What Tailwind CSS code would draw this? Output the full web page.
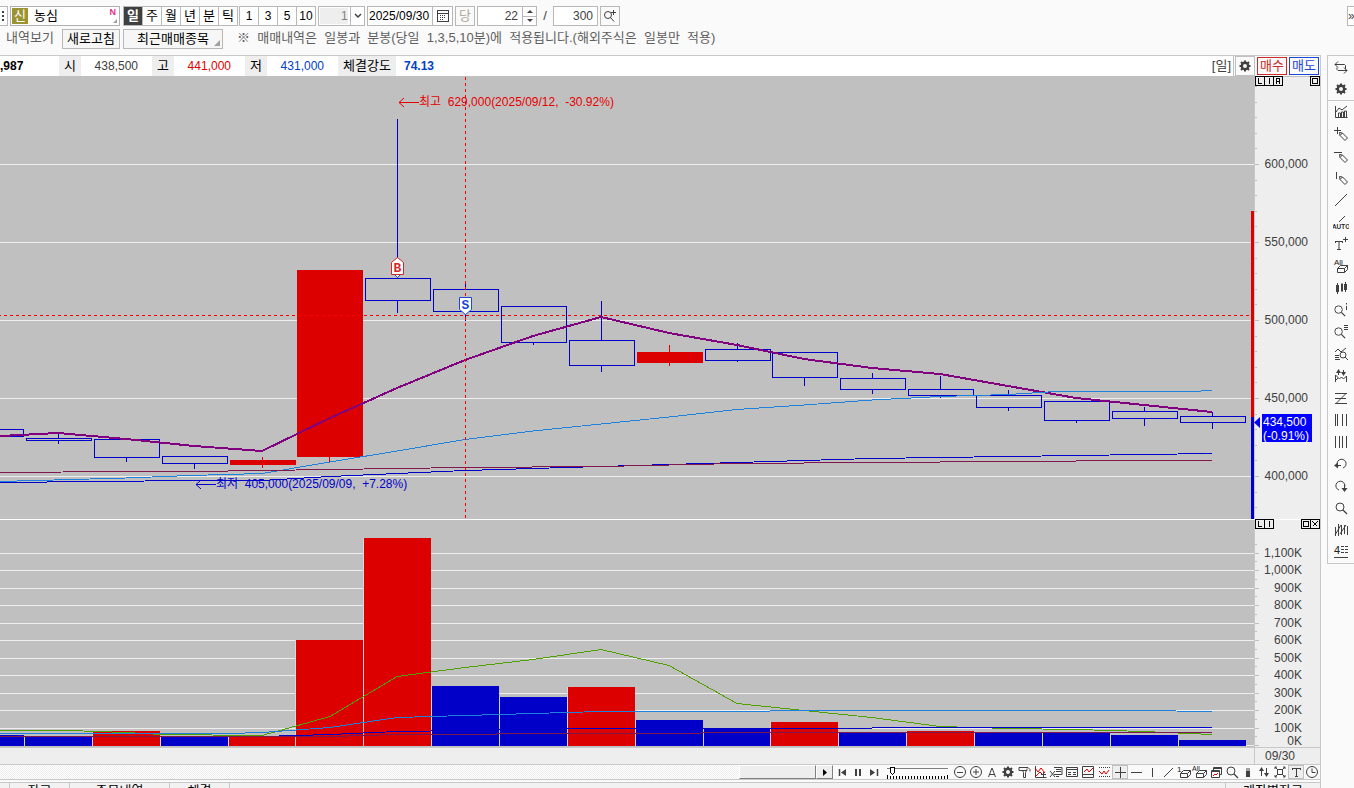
<!DOCTYPE html>
<html lang="ko">
<head>
    <meta charset="UTF-8">
    <meta name="viewport" content="width=device-width, initial-scale=1.0">
    <title>농심 일봉 차트</title>
    <script src="https://cdn.jsdelivr.net/npm/@tailwindcss/browser@4"></script>
</head>
<body class="flex h-screen flex-col overflow-hidden bg-[#fafafa] font-['Liberation_Sans','Noto_Sans_CJK_KR',sans-serif] text-[13px] leading-4 text-black">

    <!-- 아이콘 -->
    <svg class="hidden">
        <symbol id="gear" viewBox="0 0 16 16"><circle cx="8" cy="8" r="3.200" fill="none" stroke="#404040" stroke-width="2.4"/><path d="M8 2.500v2M8 11.500v2M2.500 8h2M11.500 8h2M4 4l1.500 1.500M10.500 10.500l1.500 1.500M4 12l1.500-1.500M10.500 5.500l1.500-1.500" stroke="#404040" stroke-width="2"/></symbol>
        <symbol id="search" viewBox="0 0 16 16"><circle cx="7" cy="7" r="4" fill="none" stroke="#404040"/><path d="M10 10l4 4" stroke="#404040" stroke-width="1.3"/></symbol>
        <symbol id="pencil" viewBox="0 0 16 16"><path d="M6.500 6.500l3 .5 5 5-2.500 2.500-5-5zM7 9.500l2.500-2.500" fill="none" stroke="#404040"/></symbol>
        <symbol id="eraser" viewBox="0 0 16 16"><path d="M4.500 9.500l3-3h7l-3 3zM4.500 9.500v4h7v-4M11.500 13.500l3-3v-4" fill="none" stroke="#404040"/></symbol>
        <symbol id="slash" viewBox="0 0 16 16"><path d="M2 14L14 2" stroke="#404040"/></symbol>
    </svg>

    <header class="flex h-[55px] shrink-0 flex-col gap-[3px] pt-1.5">
        <div class="flex h-5 items-stretch">
            <button class="w-2 border border-l-0 border-[#b8b8b8] bg-white" aria-label="메뉴"><svg class="h-4 w-full" viewBox="0 0 7 16" shape-rendering="crispEdges"><path d="M2 3h2v2H2zM2 7h2v2H2zM2 11h2v2H2z" fill="#404040"/></svg></button>
            <div class="relative ml-0.5 flex w-[110px] items-center border border-[#b0b0b0] bg-white">
                <span class="ml-px h-4 w-4 bg-[#9c9430] text-center leading-4 text-white">신</span>
                <input class="ml-1.5 w-16 bg-transparent outline-none" value="농심" aria-label="종목">
                <b class="absolute top-0 right-[3px] text-[9px] leading-[10px] text-[#e0308a]">N</b>
                <svg class="absolute right-0.5 bottom-0.5 size-1" viewBox="0 0 4 4"><path d="M4 0v4H0z" fill="#a0a0a0"/></svg>
            </div>
            <div class="ml-[3px] flex divide-x divide-[#b8b8b8] border border-[#b8b8b8] bg-white">
                <button class="w-[19px] bg-[#404040] font-bold text-white">일</button>
                <button class="w-[19px]">주</button>
                <button class="w-[19px]">월</button>
                <button class="w-[19px]">년</button>
                <button class="w-[19px]">분</button>
                <button class="w-[18px]">틱</button>
            </div>
            <div class="ml-px flex divide-x divide-[#b8b8b8] border border-[#b8b8b8] bg-white text-xs">
                <button class="w-[19px]">1</button>
                <button class="w-[19px]">3</button>
                <button class="w-[19px]">5</button>
                <button class="w-[18px]">10</button>
            </div>
            <div class="relative ml-0.5 flex w-[47px] border border-[#b8b8b8] bg-white">
                <select class="m-px w-7 appearance-none bg-[#eee] pl-[21px] text-xs text-[#808080] outline-none" aria-label="분 단위"><option>1</option></select>
                <span class="ml-px flex flex-1 items-center justify-center border-l border-[#b8b8b8]"><svg class="w-2" viewBox="0 0 8 6"><path d="M1 1l3 3 3-3" fill="none" stroke="#404040" stroke-width="1.500"/></svg></span>
            </div>
            <div class="ml-0.5 flex w-[86px] border border-[#b8b8b8] bg-white">
                <input class="w-16 min-w-0 pl-px text-xs outline-none" value="2025/09/30" aria-label="날짜">
                <button class="flex flex-1 items-center justify-center border-l border-[#b8b8b8]" aria-label="달력"><svg class="size-3" viewBox="0 0 12 12" shape-rendering="crispEdges"><path d="M.5.5h11v11H.5zM0 3.500h12" fill="none" stroke="#404040"/><path d="M3 5.500h6M3 7.500h6M3 9.500h4" stroke="#404040" stroke-dasharray="1 1"/></svg></button>
            </div>
            <button class="ml-0.5 w-5 border border-[#b8b8b8] text-[#b0a898]">당</button>
            <div class="ml-0.5 flex w-[60px] border border-[#b8b8b8] bg-white">
                <input class="w-11 min-w-0 pr-1 text-right text-xs text-[#404040] outline-none" value="22" aria-label="현재 봉">
                <div class="flex flex-1 flex-col divide-y divide-[#b8b8b8] border-l border-[#b8b8b8]">
                    <button class="flex flex-1 items-center justify-center" aria-label="증가"><svg class="w-1.5" viewBox="0 0 6 3"><path d="M3 0l3 3H0z" fill="#404040"/></svg></button>
                    <button class="flex flex-1 items-center justify-center" aria-label="감소"><svg class="w-1.5" viewBox="0 0 6 3"><path d="M0 0h6L3 3z" fill="#404040"/></svg></button>
                </div>
            </div>
            <span class="w-4 pt-0.5 text-center text-[#404040]">/</span>
            <input class="w-[45px] border border-[#b8b8b8] bg-white pr-1 text-right text-xs text-[#404040] outline-none" value="300" aria-label="전체 봉">
            <button class="ml-0.5 flex w-5 items-center justify-center border border-[#b8b8b8]" aria-label="확대"><svg class="size-4" viewBox="0 0 16 16"><circle cx="6" cy="7" r="3.500" fill="none" stroke="#404040"/><path d="M8.500 9.500l3.500 4M9 4.500h5M11.500 2v5" stroke="#404040"/></svg></button>
            <button class="ml-auto w-[7px] overflow-hidden border border-r-0 border-[#b8b8b8] bg-white text-xs text-[#404040]">»</button>
        </div>
        <div class="flex h-5 items-stretch text-[#606060]">
            <span class="w-[62px] pt-px pl-1.5">내역보기</span>
            <button class="w-[58px] border border-[#b8b8b8] bg-[#f6f6f6] text-black">새로고침</button>
            <button class="relative ml-[3px] w-[100px] border border-[#b8b8b8] bg-[#f6f6f6] text-black">최근매매종목<svg class="absolute right-0.5 bottom-0.5 size-1.5" viewBox="0 0 4 4"><path d="M4 0v4H0z" fill="#a0a0a0"/></svg></button>
            <p class="ml-3.5 pt-px whitespace-pre">※  매매내역은  일봉과  분봉(당일  1,3,5,10분)에  적용됩니다.(해외주식은  일봉만  적용)</p>
        </div>
    </header>

    <div class="flex flex-1 items-start">
        <main class="min-w-0 flex-1 border-t border-r border-[#c8c8c8]">
            <!-- 시세 줄 -->
            <div class="flex h-[21px] items-stretch border-b border-[#c0c0c0] bg-white leading-5">
                <b class="w-[59px] text-xs leading-5">,987</b>
                <span class="w-[22px] bg-[#eee] text-center">시</span>
                <span class="w-[71px] pr-3.5 text-right text-xs leading-5 text-[#404040]">438,500</span>
                <span class="w-[22px] bg-[#eee] text-center">고</span>
                <span class="w-[71px] pr-3.5 text-right text-xs leading-5 text-[#dc0000]">441,000</span>
                <span class="w-[22px] bg-[#eee] text-center">저</span>
                <span class="w-[71px] pr-3.5 text-right text-xs leading-5 text-[#0040c8]">431,000</span>
                <span class="w-[58px] bg-[#eee] text-center">체결강도</span>
                <b class="ml-2 text-xs leading-5 text-[#0040c8]">74.13</b>
                <span class="ml-auto border-r border-[#c0c0c0] pr-0.5 text-[#404040]">[일]</span>
                <div class="flex gap-0.5 bg-[#fafafa] pr-px pl-px">
                    <button class="flex w-5 items-center justify-center border border-[#c0c0c0]" aria-label="설정"><svg class="size-4"><use href="#gear"/></svg></button>
                    <button class="my-px w-[30px] border border-[#d42828] leading-4 text-[#d42828]">매수</button>
                    <button class="my-px w-[30px] border border-[#1c48d8] leading-4 text-[#1c48d8]">매도</button>
                </div>
            </div>

            <!-- 가격 차트 -->
            <div class="flex h-[443px] border-b border-white bg-[#c0c0c0]">
                <svg id="price" class="h-full min-w-0 flex-1 text-xs" viewBox="0 77 1254 442" preserveAspectRatio="xMaxYMin slice"></svg>
                <svg id="price-axis" class="h-full w-[66px] overflow-visible border-l border-[#c8c8c8] bg-[#eee] text-xs" viewBox="1255 77 65 442"></svg>
            </div>

            <!-- 거래량 차트 -->
            <div class="flex h-[227px] bg-[#c0c0c0]">
                <svg id="volume" class="h-full min-w-0 flex-1" viewBox="0 520 1254 227" preserveAspectRatio="xMaxYMin slice"></svg>
                <svg id="volume-axis" class="h-full w-[66px] overflow-visible border-l border-[#c8c8c8] bg-[#eee] text-xs" viewBox="1255 520 65 227"></svg>
            </div>

            <div class="flex h-[18px] justify-end border-y border-[#c8c8c8] bg-[#eee]">
                <span class="w-[66px] border-l border-[#c8c8c8] pl-2.5 text-xs text-[#404040]">09/30</span>
            </div>

            <!-- 하단 도구 -->
            <div class="flex h-[15px] items-stretch border-b border-[#c8c8c8]">
                <div class="flex min-w-0 flex-1 justify-end bg-[repeating-conic-gradient(#eee_0_25%,#fff_0_50%)] bg-size-[2px_2px]">
                    <div class="w-[77px] border border-t-white border-r-[#808080] border-b-[#808080] border-l-white bg-[#eee]"></div>
                    <button class="flex w-[17px] items-center justify-center border border-t-white border-r-[#808080] border-b-[#808080] border-l-white bg-[#eee]" aria-label="오른쪽"><svg class="h-[7px] w-1" viewBox="0 0 4 7"><path d="M0 0l4 3.500L0 7z"/></svg></button>
                </div>
                <div class="flex items-center pl-px">
                    <button aria-label="처음"><svg class="size-4" viewBox="0 0 16 16"><path d="M5.500 5v7" stroke="#404040" stroke-width="1.500"/><path d="M12 5v7L7 8.500z" fill="#404040"/></svg></button>
                    <button aria-label="일시정지"><svg class="size-4" viewBox="0 0 16 16" shape-rendering="crispEdges"><path d="M5 5h2v7H5zM9 5h2v7H9z" fill="#404040"/></svg></button>
                    <button aria-label="끝"><svg class="size-4" viewBox="0 0 16 16"><path d="M11.500 5v7" stroke="#404040" stroke-width="1.500"/><path d="M4 5v7l5-3.500z" fill="#404040"/></svg></button>
                    <div class="relative mr-1 ml-[5px] h-3.5 w-[61px]">
                        <svg class="h-3.5 w-full" viewBox="0 0 61 14" shape-rendering="crispEdges"><path d="M0 3.500h61" stroke="#808080"/><path d="M0 12.500h61" stroke="#000" stroke-width="3" stroke-dasharray="1 2"/><path d="M.5 10v4M60.500 10v4" stroke="#000"/><path d="M3.500 2.500h4v5l-2 2-2-2z" fill="#fff" stroke="#000"/></svg>
                        <input type="range" class="absolute inset-0 w-full opacity-0" min="0" max="20" value="1" aria-label="속도">
                    </div>
                    <div id="bottom-tools" class="flex"></div>
                </div>
            </div>

            <!-- 화면 탭 -->
            <nav class="mt-0.5 flex h-8 items-start border-t border-[#c8c8c8] bg-[#f2f2f2] leading-4 *:h-full *:pb-4">
                <span class="w-2.5 border-r border-[#c8c8c8]"></span>
                <button class="w-[60px] border-r border-[#c8c8c8]">잔고</button>
                <button class="w-[100px] border-r border-[#c8c8c8]">주문내역</button>
                <button class="w-[60px] border-r border-[#c8c8c8]">체결</button>
                <button class="ml-auto w-[95px] border-l border-[#c8c8c8]">계좌별잔고</button>
            </nav>
        </main>

        <!-- 우측 그리기 도구 -->
        <aside id="side-tools" class="ml-1.5 w-[27px] shrink-0 border-y border-l border-[#c8c8c8]"></aside>
    </div>

    <script>
        const RED = '#dc0000', BLUE = '#0000c8';

        // 봉 왼쪽 x, 색, 몸통 위/아래, 꼬리 위/아래, 거래량 막대 위
        const candles = [
            [-42, 'b', 429, 436, 429, 436, 735],
            [26, 'b', 438, 440, 434, 443, 737],
            [94, 'b', 439, 457, 439, 461, 731, 'r'],
            [162, 'b', 456, 463, 456, 468, 737],
            [230, 'r', 460, 464, 457, 467, 736],
            [297, 'r', 270, 456, 270, 461, 640],
            [365, 'b', 278, 300, 119, 312, 538, 'r'],
            [433, 'b', 289, 311, 284, 320, 686],
            [501, 'b', 306, 342, 306, 344, 697],
            [569, 'b', 340, 365, 301, 371, 687, 'r'],
            [637, 'r', 352, 362, 345, 365, 720, 'b'],
            [705, 'b', 349, 360, 343, 361, 728],
            [772, 'b', 352, 377, 352, 385, 722, 'r'],
            [840, 'b', 378, 389, 373, 393, 732],
            [908, 'b', 389, 395, 376, 397, 731, 'r'],
            [976, 'b', 395, 407, 390, 410, 733],
            [1044, 'b', 401, 420, 401, 422, 733],
            [1112, 'b', 411, 418, 407, 425, 735],
            [1180, 'b', 416, 422, 412, 428, 740]
        ];

        const priceLines = [
            ['#800080', 2, '0,436 20,435 58,433 126,439 194,446 262,451 330,418 397,388 465,360 533,336 601,317 669,333 737,345 804,359 872,368 940,374 1008,386 1076,398 1144,405 1212,412'],
            ['#1e82dc', 1, '0,481.500 126,478 190,475.500 262,473.500 330,462 397,451 465,439.500 533,431 601,424 669,417 737,409.500 804,405 872,400 940,396.500 1008,394.500 1056,391.500 1190,391.500 1212,390.500'],
            [BLUE, 1, '0,482.500 194,480.500 262,480.500 330,476.500 397,473.500 465,470.500 533,468.500 601,466.500 669,464.500 737,462.500 804,460.500 872,458.500 940,457.500 1008,456.500 1076,455.500 1144,454.500 1212,453.500'],
            ['#801850', 1, '0,472.500 126,471.500 194,471.500 330,469.500 465,467.500 601,466.500 737,463.500 872,462.500 1008,461.500 1144,460.500 1212,460.500']
        ];
        const volumeLines = [
            ['#50a000', 1, '0,730.500 69,730.500 126,732.500 162,734.500 262,735.500 330,716.500 397,676.500 465,667.500 533,659.500 601,649.500 669,665.500 737,703.500 804,710.500 872,717.500 940,726.500 1008,728.500 1076,729.500 1144,731.500 1212,734.500'],
            ['#1e82dc', 1, '0,733.500 228,733.500 262,732.500 330,727.500 397,717.500 465,715.500 533,713.500 601,711.500 737,711.500 804,710.500 1140,710.500 1212,711.500'],
            [BLUE, 1, '0,736.500 262,736.500 330,734.500 397,731.500 465,730.500 533,729.500 601,728.500 804,728.500 940,727.500 1212,727.500'],
            ['#801850', 1, '0,736.500 330,736.500 397,734.500 601,733.500 804,732.500 1212,732.500']
        ];

        const rect = (x, y, w, h, fill) => `<rect x="${x}" y="${y}" width="${w}" height="${h}" fill="${fill}"/>`;
        const lines = list => list.map(([c, w, p]) => `<polyline points="${p}" fill="none" stroke="${c}" stroke-width="${w}"/>`).join('');
        const color = c => c === 'r' ? RED : BLUE;

        // 가격 차트
        let out = '<g shape-rendering="crispEdges">';
        [164, 242, 320, 398, 476].forEach(y => out += rect(-2000, y, 3254, 1, '#eee'));
        candles.forEach(([x, c, top, bottom, high, low]) => {
            out += rect(x + 32, high, 1, top - high, color(c)) + rect(x + 32, bottom, 1, low - bottom + 1, color(c));
            out += c === 'r'
                ? rect(x, top, 66, bottom - top + 1, RED)
                : `<rect x="${x + 0.5}" y="${top + 0.5}" width="65" height="${bottom - top}" fill="none" stroke="${BLUE}"/>`;
        });
        out += lines(priceLines);
        out += '<path d="M-2000 315.500H1254M465.500 77V518" fill="none" stroke="#f00" stroke-dasharray="3 3"/>';
        out += rect(1251, 211, 3, 206, RED) + rect(1251, 417, 3, 102, BLUE) + '</g>';
        out += `<path d="M399 102.500h20M404 98l-5 4.500 5 4.500" fill="none" stroke="#e60000"/><text x="419" y="106" fill="#e60000" class="whitespace-pre">최고  629,000(2025/09/12,  -30.92%)</text>`;
        out += `<path d="M196 484.500h20M201 480l-5 4.500 5 4.500" fill="none" stroke="${BLUE}"/><text x="216" y="488" fill="${BLUE}" class="whitespace-pre">최저  405,000(2025/09/09,  +7.28%)</text>`;
        out += '<path d="M391.500 274.500v-12l6-5 6 5v12z" fill="#fff" stroke="#d42828"/><path d="M395 275l2.500 2.500 2.500-2.500" fill="#fff" stroke="#1c48d8"/><text x="397.500" y="272" text-anchor="middle" font-size="13" font-weight="bold" font-family="Liberation Mono" fill="#d42828">B</text>';
        out += '<path d="M459.500 297.500h12v12l-6 5-6-5z" fill="#fff" stroke="#1c48d8"/><text x="465.500" y="309" text-anchor="middle" font-size="13" font-weight="bold" font-family="Liberation Mono" fill="#1c48d8">S</text>';
        document.getElementById('price').innerHTML = out;

        // 거래량 차트
        const volumeGrid = [553, 570, 588, 605, 623, 640, 658, 675, 693, 710, 728, 745];
        out = '<g shape-rendering="crispEdges">';
        volumeGrid.forEach(y => out += rect(-2000, y, 3254, 1, '#eee'));
        candles.forEach(([x, c, , , , , top, v]) => {
            out += rect(x - 2, top, 1, 746 - top, '#d8d8d8') + rect(x - 1, top, 67, 746 - top, color(v || c));
        });
        out += lines(volumeLines) + '</g>';
        document.getElementById('volume').innerHTML = out;

        // 축
        const mark = (x, y, inner) => `<rect x="${x + 0.5}" y="${y + 0.5}" width="9" height="9" fill="#eee" stroke="#000"/><path d="${inner}" transform="translate(${x} ${y})" fill="none" stroke="#000"/>`;
        const L = 'M3.500 2v5.500h3', I = 'M5.500 2v6', R = 'M3.500 8V2.500h3v2.500h-3M5.500 5l1.500 3', BOX = 'M2.500 2.500h5v5h-5z', X = 'M2.500 2.500l5 5M7.500 2.500l-5 5';
        out = '<g shape-rendering="crispEdges">';
        for (let i = 0; i < 28; i++) out += rect(1255, Math.round(86 + i * 15.6), 2, 1, '#c0c0c0');
        [164, 242, 320, 398, 476].forEach(y => out += rect(1255, y, 4, 1, '#c0c0c0'));
        out += mark(1255, 76, L) + mark(1264, 76, I) + mark(1273, 76, R) + mark(1310, 76, BOX) + '</g>';
        ['600,000', '550,000', '500,000', '450,000', '400,000'].forEach((t, i) => {
            out += `<text x="1308" y="${168 + i * 78}" text-anchor="end" fill="#404040">${t}</text>`;
        });
        out += rect(1262, 414, 50, 28, '#00f') + '<path d="M1260 417v11l-6-5.500z" fill="#00f"/><text x="1263" y="426" fill="#fff">434,500</text><text x="1263" y="440" fill="#fff">(-0.91%)</text>';
        document.getElementById('price-axis').innerHTML = out;

        out = '<g shape-rendering="crispEdges">';
        volumeGrid.forEach(y => out += rect(1255, y, 4, 1, '#c0c0c0') + rect(1255, y - 9, 2, 1, '#c0c0c0'));
        out += mark(1255, 519, L) + mark(1264, 519, I) + mark(1301, 519, BOX) + mark(1310, 519, X) + '</g>';
        ['1,100K', '1,000K', '900K', '800K', '700K', '600K', '500K', '400K', '300K', '200K', '100K', '0K'].forEach((t, i) => {
            out += `<text x="1302" y="${i === 11 ? 745 : volumeGrid[i] + 4}" text-anchor="end" fill="#404040">${t}</text>`;
        });
        document.getElementById('volume-axis').innerHTML = out;

        // 도구 아이콘
        const p = (d, c = '#404040') => `<path d="${d}" fill="none" stroke="${c}"/>`;
        const f = (d, c = '#404040') => `<path d="${d}" fill="${c}"/>`;
        const u = id => `<use href="#${id}" width="16" height="16"/>`;
        const label = (x, y, t, s = 8) => `<text x="${x}" y="${y}" font-size="${s}" fill="#202020">${t}</text>`;
        const side = [
            ['동기화', p('M2 5.500h9.500l1 1v4M5 2.500l-3 3 3 3M14 11.500H5l-1-1v-2M11 8.500l3 3-3 3')],
            ['설정', u('gear')],
            ['지표', p('M2.500 2v11.500h12M5.500 13v-4h2v4M8.500 13v-5h2v5M11.500 13V7h2v6M3 8l3-4 3 2 5-4')],
            ['십자선 그리기', p('M1 4.500h7M4.500 1v7') + u('pencil')],
            ['수평선 그리기', p('M1 4.500h8') + u('pencil')],
            ['수직선 그리기', p('M3.500 2v7') + u('pencil')],
            ['추세선', u('slash')],
            ['자동 추세선', p('M6 8l6-6') + '<text x="8" y="15" text-anchor="middle" font-size="7" font-family="Roboto" font-weight="500" fill="#202020">AUTO</text>'],
            ['문자', p('M2 5.500h8M2.500 5v2M9.500 5v2M6 5.500v8M4 13.500h4M10 3.500h5M12.500 1v5')],
            ['전체 삭제', label(1, 7, 'All', 8) + '<use href="#eraser" x="0" y="1" width="16" height="16"/>'],
            ['봉', f('M3 5h3v7H3zM4 3h1v11H4zM8 4h2v7H8zM11 4h3v6h-3zM12 2h1v10h-1z') + p('M9 3v9')],
            ['정보 조회', '<use href="#search" x="-1" y="1" width="15" height="15"/>' + p('M13.500 4v4M13.500 1v1.500')],
            ['목록 조회', '<use href="#search" x="-1" y="1" width="15" height="15"/>' + p('M11 1.500h4M11 3.500h4M11 5.500h4')],
            ['차트 조회', p('M2 6l3-3 3 3 5-4M2 9.500h4M2 11.500h4M2 13.500h5') + '<circle cx="10" cy="9" r="3" fill="none" stroke="#404040"/>' + p('M12 11l3 3')],
            ['매매 표시', p('M2.500 14V7l4 4 2-2 2 2 3-3v6M2 13l3-3M5.500 7V2M10.500 2v5') + f('M3 5l2.500-4L8 5zM8 4l2.500 4L13 4z')],
            ['지그재그', p('M2 3.500h12M2 8.500h11M2 13.500h12M13 3.500l-10 10')],
            ['시간대', p('M2.500 2v12M4.500 2v12M9.500 2v12M13.500 2v12')],
            ['등간격', p('M2.500 2v12M6.500 2v12M9.500 2v12M13.500 2v12')],
            ['되돌리기', p('M5 10.500A4.500 4.500 0 1 1 10 12M2 9.500h6') + f('M5 6.500v6l-4-3z')],
            ['다시 실행', p('M6 12A4.500 4.500 0 1 1 11.500 9.500M11.500 7v6') + f('M8.500 10h6l-3 4z')],
            ['돋보기', u('search')],
            ['패턴', p('M2.500 14V5M5.500 14V2M8.500 13V3M11.500 12V3M14.500 13V4M2 13L8 3M7 12l6-9')],
            ['4분할', label(1, 10, '4', 11) + p('M8 2.500h3M12 2.500h3M8 5.500h3M12 5.500h3M8 8.500h3M12 8.500h3M1 13.500h14')]
        ];
        document.getElementById('side-tools').innerHTML = side.map(([name, body], i) =>
            `<button class="${i === 1 ? 'flex h-[23px] w-full items-center justify-center border-b border-[#c8c8c8]' : 'flex h-[22px] w-full items-center justify-center'}" aria-label="${name}"><svg class="size-4" viewBox="0 0 16 16">${body}</svg></button>`).join('');

        const circle = '<circle cx="8" cy="8" r="5.500" fill="none" stroke="#404040"/>';
        const bottom = [
            ['축소', circle + p('M5 8.500h6')],
            ['확대', circle + p('M5 8h6M8 5v6')],
            ['글자', p('M4.500 13l3.500-9 3.500 9M5.500 10.500h5')],
            ['설정', u('gear')],
            ['도구', p('M3 3.500h9l2 2v2M3 3.500v3h8v-2M6.500 6.500l1 2v5h2v-5l1-2')],
            ['지표 추가', p('M3.500 2v11.500h11') + p('M3 4l3 4 3-4 4 5M4 12l4-4 3 3', RED) + p('M9 10.500h5M11.500 8v5')],
            ['지표 삭제', p('M6 3.500h8v7H6M8 5.500h5M8 7.500h5M2 7l5 6M7 7l-5 6M8 12.500h3')],
            ['표', p('M2.500 3.500h11v9h-11zM2 5.500h12M4 8.500h3M4 10.500h3M9 8.500h3M9 10.500h3')],
            ['차트 분할', p('M2.500 2.500h11v11h-11zM3 10.500h10') + p('M4 8l3-3 2 3 4-4', RED)],
            ['신호', '<path d="M3 3.500h11M3 12.500h11" stroke="#404040" stroke-dasharray="1 1"/>' + p('M3 7l3 3 2-3 2 3 3-4', RED)],
            ['십자선', p('M3 8.500h11M8.500 3v11')],
            ['수평선', p('M3 8.500h11')],
            ['수직선', p('M8.500 4v9')],
            ['추세선', '<path d="M4 13l9-9" stroke="#404040"/>'],
            ['하나 삭제', label(1, 8, '1', 8) + u('eraser')],
            ['모두 삭제', label(0, 7, 'All', 7) + u('eraser')],
            ['창 복사', p('M5.500 6V3.500h8v7H12M5 4.500h9M3.500 6.500h8v7h-8zM3 7.500h9') + p('M5 12l2-2 1 1 2-2', RED)],
            ['돋보기', u('search')],
            ['색상', f('M6 4h4v3H6z', '#a0a0a0') + f('M6 7h4v6H6z')],
            ['순서', p('M5.500 12V4M10.500 4v8') + f('M3 7l2.500-4L8 7zM8 9l2.500 4L13 9z')],
            ['전체화면', p('M5.500 5.500h5v5h-5zM3 5V3h2M11 3h2v2M13 11v2h-2M5 13H3v-2M3 3l3 3M13 3l-3 3M3 13l3-3M13 13l-3-3')],
            ['텍스트', p('M4 4.500h9M4.500 4v2M12.500 4v2M8.500 4.500v8M7 12.500h3')],
            ['시간', circle + p('M8 4.500v4h3.500')]
        ];
        document.getElementById('bottom-tools').innerHTML = bottom.map(([name, body], i) =>
            `<button class="${i === 10 || i === 21 ? 'bg-[#eee] outline outline-[#c0c0c0] -outline-offset-1' : ''}" aria-label="${name}"><svg class="h-3.5 w-4" viewBox="0 1 16 14">${body}</svg></button>`).join('');
    </script>
</body>
</html>
